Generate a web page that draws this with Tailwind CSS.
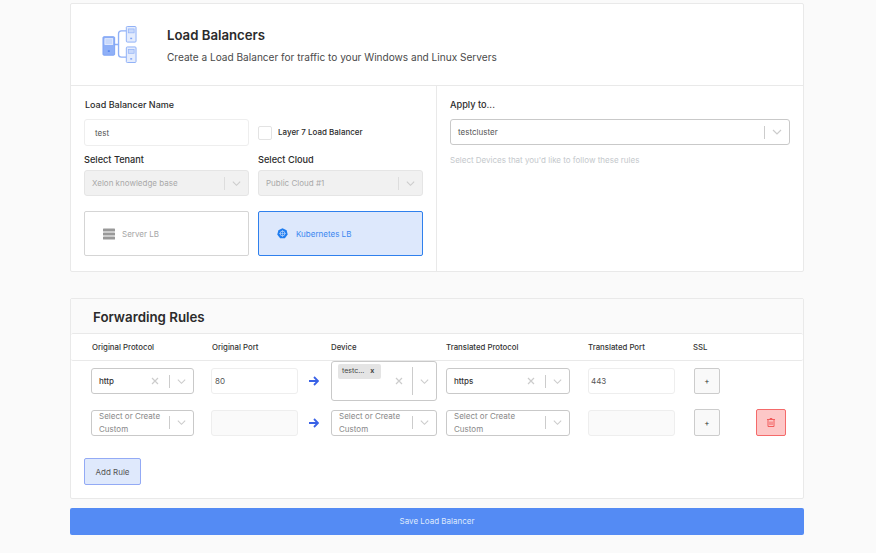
<!DOCTYPE html>
<html lang="en">
<head>
    <meta charset="UTF-8">
    <meta name="viewport" content="width=device-width, initial-scale=1.0">
    <title>Load Balancers</title>
    <script src="https://cdn.jsdelivr.net/npm/@tailwindcss/browser@4"></script>
</head>
<body class="bg-[#fafafa] font-['Inter',sans-serif] text-[#333]">
<div class="w-[876px] h-[553px] overflow-hidden px-[70px] pt-[3px]">

    <!-- top card -->
    <div class="w-[734px] h-[269px] bg-white border border-[#e9e9e9] rounded-[2px]">
        <div class="h-[82px] flex items-center border-b border-[#e9e9e9]">
            <svg class="ml-[31px] w-[36px] h-[38px]" viewBox="0 0 37 39" fill="none">
                <path d="M12 19h5M17 19V8q0-3 3-3h5M17 19v10q0 3 3 3h5" stroke="#8fb0f7" stroke-width="1.4"/>
                <rect x="1" y="11" width="12" height="19" rx="1" fill="#8fb0f7" stroke="#7ea3f5"/>
                <rect x="3" y="13" width="8" height="6" fill="#c9d9fb" stroke="#eef3fe" stroke-width=".8"/>
                <rect x="6" y="25" width="2" height="1.5" fill="#4f80ee"/>
                <rect x="25" y="0.5" width="10" height="16" rx="1" fill="#e4ecfd" stroke="#8fb0f7"/>
                <rect x="27" y="3" width="6" height="4" fill="#c9d9fb" stroke="#8fb0f7" stroke-width=".7"/>
                <rect x="29" y="12" width="2" height="1.5" fill="#7ea3f5"/>
                <rect x="25" y="21.5" width="10" height="16" rx="1" fill="#e4ecfd" stroke="#8fb0f7"/>
                <rect x="27" y="24" width="6" height="4" fill="#c9d9fb" stroke="#8fb0f7" stroke-width=".7"/>
                <rect x="29" y="33" width="2" height="1.5" fill="#7ea3f5"/>
            </svg>
            <div class="ml-[29px] -mt-[1px]">
                <h1 class="text-[13.2px] leading-[20px] font-semibold text-[#2b2b2b]">Load Balancers</h1>
                <p class="mt-[5px] text-[10.08px] leading-[14px] text-[#4a4a4a]">Create a Load Balancer for traffic to your Windows and Linux Servers</p>
            </div>
        </div>

        <div class="flex h-[185px]">
            <div class="w-[366px] border-r border-[#e9e9e9] pl-[13px] pt-[13px]">
                <div class="ml-px text-[9px] leading-[12px] font-medium text-[#2b2b2b]">Load Balancer Name</div>
                <div class="flex items-center mt-[8px]">
                    <div class="w-[165px] h-[27px] border border-[#eee] rounded-[3px] flex items-center pl-[10px] text-[8px] text-[#555]">test</div>
                    <div class="ml-[9px] w-[14px] h-[14px] border border-[#e3e3e3] rounded-[2px]"></div>
                    <div class="ml-[6px] pb-[1px] text-[8px] font-medium text-[#2b2b2b]">Layer 7 Load Balancer</div>
                </div>
                <div class="flex gap-[9px] mt-[8px]">
                    <div class="w-[165px]">
                        <div class="text-[9.2px] leading-[12px] font-medium text-[#2b2b2b]">Select Tenant</div>
                        <div class="mt-[4px] h-[26px] bg-[#f1f1f1] border border-[#e5e5e5] rounded-[3px] flex items-center pl-[7px] text-[8px] text-[#a9a9a9]">
                            <span class="flex-1">Xelon knowledge base</span>
                            <span class="w-px h-[13px] bg-[#ddd]"></span>
                            <svg class="mx-[6px] w-[11px] h-[11px]" viewBox="0 0 12 12" fill="none"><path d="M2 4l4 4 4-4" stroke="#ccc" stroke-width="1.2"/></svg>
                        </div>
                    </div>
                    <div class="w-[165px]">
                        <div class="text-[9.2px] leading-[12px] font-medium text-[#2b2b2b]">Select Cloud</div>
                        <div class="mt-[4px] h-[26px] bg-[#f1f1f1] border border-[#e5e5e5] rounded-[3px] flex items-center pl-[7px] text-[8px] text-[#a9a9a9]">
                            <span class="flex-1">Public Cloud #1</span>
                            <span class="w-px h-[13px] bg-[#ddd]"></span>
                            <svg class="mx-[6px] w-[11px] h-[11px]" viewBox="0 0 12 12" fill="none"><path d="M2 4l4 4 4-4" stroke="#ccc" stroke-width="1.2"/></svg>
                        </div>
                    </div>
                </div>
                <div class="flex gap-[9px] mt-[15px]">
                    <div class="w-[165px] h-[45px] border border-[#d5d5d5] rounded-[2px] flex items-center pl-[18px] text-[8px] text-[#a5a5a5]">
                        <svg class="w-[12px] h-[12px]" viewBox="0 0 12 12" fill="#999"><rect y="0.5" width="12" height="3" rx=".6"/><rect y="4.5" width="12" height="3" rx=".6"/><rect y="8.5" width="12" height="3" rx=".6"/></svg>
                        <span class="ml-[7px]">Server LB</span>
                    </div>
                    <div class="w-[165px] h-[45px] bg-[#dde8fc] border border-[#2f80ed] rounded-[2px] flex items-center pl-[18px] text-[8px] text-[#3b87f0]">
                        <svg class="w-[11px] h-[11px]" viewBox="0 0 12 12" fill="none"><path d="M6 .3l4.5 2.1 1.2 4.7-3.1 4H3.4l-3.1-4 1.2-4.7z" fill="#1f7df0"/><circle cx="6" cy="6" r="2.6" stroke="#dde8fc" stroke-width=".7"/><path d="M6 2.4v7.2M2.4 6h7.2" stroke="#dde8fc" stroke-width=".5"/></svg>
                        <span class="ml-[8px]">Kubernetes LB</span>
                    </div>
                </div>
            </div>
            <div class="flex-1 pl-[13px] pt-[13px]">
                <div class="text-[9.2px] leading-[12px] font-medium text-[#2b2b2b]">Apply to...</div>
                <div class="mt-[8px] w-[340px] h-[26px] border border-[#c9c9c9] rounded-[3px] flex items-center pl-[7px] text-[8px] text-[#555]">
                    <span class="flex-1">testcluster</span>
                    <span class="w-px h-[13px] bg-[#ccc]"></span>
                    <svg class="mx-[6px] w-[12px] h-[12px]" viewBox="0 0 12 12" fill="none"><path d="M2 4l4 4 4-4" stroke="#ccc" stroke-width="1.2"/></svg>
                </div>
                <p class="mt-[9px] text-[8px] leading-[12px] text-[#c4c8cc]">Select Devices that you'd like to follow these rules</p>
            </div>
        </div>
    </div>

    <!-- forwarding rules -->
    <div class="mt-[26px] w-[734px] h-[201px] bg-white border border-[#e9e9e9] rounded-[2px]">
        <div class="h-[34px] bg-[#fafafa] flex items-center pl-[22px] pt-[3px] text-[13.3px] font-semibold text-[#2b2b2b]">Forwarding Rules</div>
        <div class="grid grid-cols-[120px_119px_115px_142px_105px_62px_30px] pl-[21px] pt-[2px] h-[28px] items-center border-y border-[#e9e9e9] rounded-[2px] text-[7.8px] font-medium text-[#333]">
            <div>Original Protocol</div>
            <div>Original Port</div>
            <div>Device</div>
            <div>Translated Protocol</div>
            <div>Translated Port</div>
            <div>SSL</div>
            <div></div>
        </div>

        <!-- rule 1 -->
        <div class="grid grid-cols-[120px_120px_115px_142px_106px_62px_30px] pl-[20px] h-[40px] items-center text-[8px]">
            <div class="w-[103px] h-[26px] border border-[#c9c9c9] rounded-[3px] flex items-center pl-[7px] text-[#333] font-medium">
                <span class="flex-1">http</span>
                <svg class="w-[8px] h-[8px]" viewBox="0 0 8 8" fill="none"><path d="M1 1l6 6M7 1L1 7" stroke="#ccc" stroke-width="1.2"/></svg>
                <span class="ml-[10px] w-px h-[13px] bg-[#ccc]"></span>
                <svg class="mx-[6px] w-[11px] h-[11px]" viewBox="0 0 12 12" fill="none"><path d="M2 4l4 4 4-4" stroke="#ccc" stroke-width="1.2"/></svg>
            </div>
            <div class="flex items-center">
                <div class="w-[87px] h-[26px] border border-[#eee] rounded-[3px] flex items-center pl-[3px] text-[#555]">80</div>
                <svg class="ml-[11px] w-[10px] h-[10px]" viewBox="0 0 10 10" fill="none"><path d="M0 5h8.5M5 1l4 4-4 4" stroke="#3a62e6" stroke-width="1.8"/></svg>
            </div>
            <div class="w-[106px] h-[40px] border border-[#c9c9c9] rounded-[3px] flex pl-[6px] relative">
                <div class="flex-1 pt-[2px]">
                    <span class="inline-flex items-center w-[43px] h-[15px] bg-[#e4e4e4] rounded-[2px] pl-[4px] text-[7px] text-[#444]">testc...<span class="ml-[6px] font-bold">x</span></span>
                </div>
                <svg class="self-center w-[8px] h-[8px]" viewBox="0 0 8 8" fill="none"><path d="M1 1l6 6M7 1L1 7" stroke="#ccc" stroke-width="1.2"/></svg>
                <span class="self-center ml-[9px] w-px h-[28px] bg-[#ccc]"></span>
                <svg class="self-center mx-[6px] w-[11px] h-[11px]" viewBox="0 0 12 12" fill="none"><path d="M2 4l4 4 4-4" stroke="#ccc" stroke-width="1.2"/></svg>
            </div>
            <div class="w-[124px] h-[26px] border border-[#c9c9c9] rounded-[3px] flex items-center pl-[7px] text-[#333] font-medium">
                <span class="flex-1">https</span>
                <svg class="w-[8px] h-[8px]" viewBox="0 0 8 8" fill="none"><path d="M1 1l6 6M7 1L1 7" stroke="#ccc" stroke-width="1.2"/></svg>
                <span class="ml-[10px] w-px h-[13px] bg-[#ccc]"></span>
                <svg class="mx-[6px] w-[11px] h-[11px]" viewBox="0 0 12 12" fill="none"><path d="M2 4l4 4 4-4" stroke="#ccc" stroke-width="1.2"/></svg>
            </div>
            <div class="w-[87px] h-[26px] border border-[#eee] rounded-[3px] flex items-center pl-[2px] text-[#555]">443</div>
            <div class="w-[26px] h-[26px] bg-[#f9f9f9] border border-[#ccc] rounded-[2px] flex items-center justify-center text-[8px]">+</div>
            <div></div>
        </div>

        <!-- rule 2 -->
        <div class="grid grid-cols-[120px_120px_115px_142px_106px_62px_30px] pl-[20px] mt-[8px] h-[27px] items-center text-[8px]">
            <div class="w-[103px] h-[26px] border border-[#c9c9c9] rounded-[3px] flex items-center pl-[7px] text-[#888]">
                <span class="flex-1 leading-[13px]">Select or Create Custom</span>
                <span class="w-px h-[13px] bg-[#ccc]"></span>
                <svg class="mx-[6px] w-[11px] h-[11px]" viewBox="0 0 12 12" fill="none"><path d="M2 4l4 4 4-4" stroke="#ccc" stroke-width="1.2"/></svg>
            </div>
            <div class="flex items-center">
                <div class="w-[87px] h-[26px] bg-[#fafafa] border border-[#eee] rounded-[3px]"></div>
                <svg class="ml-[11px] w-[10px] h-[10px]" viewBox="0 0 10 10" fill="none"><path d="M0 5h8.5M5 1l4 4-4 4" stroke="#3a62e6" stroke-width="1.8"/></svg>
            </div>
            <div class="w-[106px] h-[26px] border border-[#c9c9c9] rounded-[3px] flex items-center pl-[7px] text-[#888]">
                <span class="flex-1 leading-[13px]">Select or Create Custom</span>
                <span class="w-px h-[13px] bg-[#ccc]"></span>
                <svg class="mx-[6px] w-[11px] h-[11px]" viewBox="0 0 12 12" fill="none"><path d="M2 4l4 4 4-4" stroke="#ccc" stroke-width="1.2"/></svg>
            </div>
            <div class="w-[124px] h-[26px] border border-[#c9c9c9] rounded-[3px] flex items-center pl-[7px] text-[#888]">
                <span class="flex-1 leading-[13px] pr-[20px]">Select or Create Custom</span>
                <span class="w-px h-[13px] bg-[#ccc]"></span>
                <svg class="mx-[6px] w-[11px] h-[11px]" viewBox="0 0 12 12" fill="none"><path d="M2 4l4 4 4-4" stroke="#ccc" stroke-width="1.2"/></svg>
            </div>
            <div class="w-[87px] h-[26px] bg-[#fafafa] border border-[#eee] rounded-[3px]"></div>
            <div class="w-[26px] h-[27px] bg-[#f9f9f9] border border-[#ccc] rounded-[2px] flex items-center justify-center text-[8px]">+</div>
            <div class="w-[30px] h-[27px] bg-[#fdc7c7] border border-[#f46a6a] rounded-[2px] flex items-center justify-center">
                <svg class="w-[8px] h-[9px]" viewBox="0 0 8 9" fill="none"><path d="M0 1.5h8M3 1.5V.5h2v1M1 1.5V8.5h6V1.5M3 3.5v3.5M5 3.5v3.5" stroke="#f25c5c" stroke-width="1"/></svg>
            </div>
        </div>

        <button class="ml-[13px] mt-[22px] w-[57px] h-[27px] bg-[#dfe9fc] border border-[#93aaf5] rounded-[2px] text-[8px] text-[#555]">Add Rule</button>
    </div>

    <button class="block mt-[9px] w-[734px] h-[27px] pb-[2px] bg-[#548bf4] rounded-[2px] text-[8px] text-[#dfe9fc]">Save Load Balancer</button>
</div>
</body>
</html>
